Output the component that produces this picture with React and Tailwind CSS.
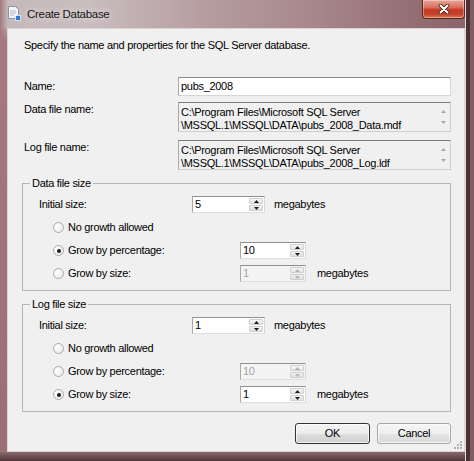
import React from "react";

function UpDown({ disabled }) {
  const c = disabled ? "#b4b4b4" : "#1e1e1e";
  return (
    <div className="flex w-[15px] flex-col gap-px py-px pr-px">
      <div className="flex flex-1 items-center justify-center rounded-[1px] border border-[#cfcfcf] bg-[linear-gradient(180deg,#f7f7f7,#e4e4e4)]">
        <svg width="5" height="3" viewBox="0 0 5 3">
          <path d="M2.5 0L5 3H0z" fill={c} />
        </svg>
      </div>
      <div className="flex flex-1 items-center justify-center rounded-[1px] border border-[#cfcfcf] bg-[linear-gradient(180deg,#f2f2f2,#dedede)]">
        <svg width="5" height="3" viewBox="0 0 5 3">
          <path d="M0 0H5L2.5 3z" fill={c} />
        </svg>
      </div>
    </div>
  );
}

function Spin({ value, disabled, wide }) {
  return (
    <div
      className={`flex h-[17px] border border-t-[#8f8f8f] border-l-[#a9a9a9] border-r-[#d9d9d9] border-b-[#dedede] ${
        disabled ? "bg-[#f4f4f4]" : "bg-white"
      } ${wide ? "w-[73px]" : "w-[66px]"}`}
    >
      <span
        className={`flex-1 pl-[2px] leading-[15px] ${
          disabled ? "text-[#a3a3a3]" : "text-black"
        }`}
      >
        {value}
      </span>
      <UpDown disabled={disabled} />
    </div>
  );
}

function Radio({ checked, label }) {
  return (
    <div className="ml-[23px] flex w-[187px] items-center">
      <span className="flex h-[11px] w-[11px] items-center justify-center rounded-full border border-[#ababab] bg-[radial-gradient(circle_at_35%_35%,#ffffff,#e6e6e6)]">
        {checked && <span className="h-[4px] w-[4px] rounded-full bg-[#1e1e1e]" />}
      </span>
      <span className="ml-[4px]">{label}</span>
    </div>
  );
}

function Group({ title, initial, mode, pct, size }) {
  return (
    <fieldset className="mt-[6px] border border-[#b6b6b6] pt-[6px] pb-[8px] pl-[7px] pr-[7px]">
      <legend className="px-[2px] leading-[14px]">{title}</legend>
      <div className="flex flex-col gap-[6px]">
        <div className="flex h-[17px] items-center">
          <span className="ml-[9px] w-[153px]">Initial size:</span>
          <Spin value={initial} wide />
          <span className="ml-[9px]">megabytes</span>
        </div>
        <div className="flex h-[17px] items-center">
          <Radio checked={mode === 0} label="No growth allowed" />
        </div>
        <div className="flex h-[17px] items-center">
          <Radio checked={mode === 1} label="Grow by percentage:" />
          <Spin value={pct} disabled={mode !== 1} />
        </div>
        <div className="flex h-[17px] items-center">
          <Radio checked={mode === 2} label="Grow by size:" />
          <Spin value={size} disabled={mode !== 2} />
          <span className="ml-[11px]">megabytes</span>
        </div>
      </div>
    </fieldset>
  );
}

function PathBox({ lines }) {
  return (
    <div className="flex h-[30px] w-[273px] border border-t-[#7e7e7e] border-l-[#a8a8a8] border-r-[#cfcfcf] border-b-[#cfcfcf] bg-[#f0f0f0]">
      <div className="flex-1 pl-[2px] pt-[3px] leading-[12.5px] text-black">
        <div>{lines[0]}</div>
        <div>{lines[1]}</div>
      </div>
      <div className="flex w-[14px] flex-col items-center justify-between py-[7px]">
        <svg width="5" height="3" viewBox="0 0 5 3">
          <path d="M2.5 0L5 3H0z" fill="#a8a8a8" />
        </svg>
        <svg width="5" height="3" viewBox="0 0 5 3">
          <path d="M0 0H5L2.5 3z" fill="#a8a8a8" />
        </svg>
      </div>
    </div>
  );
}

export default function App() {
  return (
    <div className="flex h-[461px] w-[474px] flex-col overflow-hidden bg-[linear-gradient(90deg,transparent_465px,#e4dada_465px,#e4dada_466px,#4c3034_466px,#4c3034_470px,#7e5e62_470px),linear-gradient(180deg,transparent_452px,#8a6a6e_452px,#4e3438_461px),linear-gradient(180deg,transparent_24px,#a5797e_40px,#9a6e73_461px),linear-gradient(180deg,rgba(255,255,255,0.2)_0px,rgba(255,255,255,0)_28px),linear-gradient(90deg,#a27c80_0px,#c6b9bb_8px,#c9bdbf_90px,#b79ea1_200px,#a6868a_320px,#926c70_420px,#8a6569_474px)] font-['Liberation_Sans',Arial,sans-serif] text-[11px] tracking-[-0.3px] text-black">
      <div className="flex h-[28px] shrink-0 items-start bg-[linear-gradient(90deg,#a27c80_0px,#c6b9bb_8px,#c9bdbf_90px,#b79ea1_200px,#a6868a_320px,#926c70_420px,#8a6569_465px,transparent_465px)]">
        <div className="ml-[7px] mt-[5px]">
          <svg width="14" height="16" viewBox="0 0 14 16">
            <path d="M1.5 1.5h7l3 3v9h-10z" fill="#f2f4f7" stroke="#8a949e" />
            <path d="M3 6h6M3 8h6M3 10h4" stroke="#a4aebb" strokeWidth="0.8" />
            <rect x="8.5" y="10.5" width="5" height="5" fill="#2a7bd2" stroke="#e8f0ff" strokeWidth="0.8" />
          </svg>
        </div>
        <span className="ml-[6px] mt-[7px] text-[11.5px] leading-[14px] text-[#141414] [text-shadow:0_0_6px_rgba(255,255,255,0.9)]">
          Create Database
        </span>
        <div className="ml-auto mr-[9px] flex h-[19px] w-[43px] items-center justify-center rounded-b-[4px] border border-t-0 border-[#5a2822] bg-[linear-gradient(180deg,#eaa597_0%,#d9735f_40%,#c33a24_55%,#c6432a_80%,#de7a52_100%)] shadow-[inset_0_0_0_1px_rgba(255,255,255,0.35)]">
          <svg width="12" height="10" viewBox="0 0 12 10">
            <path d="M2.5 1.5L9.5 8.5M9.5 1.5L2.5 8.5" stroke="#3a1a14" strokeWidth="3.6" strokeLinecap="round" />
            <path d="M2.5 1.5L9.5 8.5M9.5 1.5L2.5 8.5" stroke="#ffffff" strokeWidth="2.1" strokeLinecap="round" />
          </svg>
        </div>
      </div>

      <div className="relative ml-[7px] flex h-[424px] w-[458px] shrink-0 flex-col border border-[#ddd3d4] bg-[#f0f0f0] pl-[14px] pr-[13px] pt-[9px]">
        <p className="ml-[2px] leading-[14px]">
          Specify the name and properties for the SQL Server database.
        </p>

        <div className="mt-[25px] flex items-center">
          <span className="ml-[2px] w-[154px]">Name:</span>
          <div className="h-[19px] w-[273px] border border-t-[#8a8a8a] border-l-[#ababab] border-r-[#d6d6d6] border-b-[#d6d6d6] bg-white pl-[2px] leading-[17px] text-black">
            pubs_2008
          </div>
        </div>

        <div className="mt-[6px] flex items-start">
          <span className="ml-[2px] w-[154px] leading-[14px]">Data file name:</span>
          <PathBox
            lines={[
              "C:\\Program Files\\Microsoft SQL Server",
              "\\MSSQL.1\\MSSQL\\DATA\\pubs_2008_Data.mdf",
            ]}
          />
        </div>

        <div className="mt-[8px] flex items-start">
          <span className="ml-[2px] w-[154px] leading-[14px]">Log file name:</span>
          <PathBox
            lines={[
              "C:\\Program Files\\Microsoft SQL Server",
              "\\MSSQL.1\\MSSQL\\DATA\\pubs_2008_Log.ldf",
            ]}
          />
        </div>

        <Group title="Data file size" initial="5" mode={1} pct="10" size="1" />
        <Group title="Log file size" initial="1" mode={2} pct="10" size="1" />

        <div className="mt-[11px] flex justify-end gap-[7px]">
          <button className="h-[21px] w-[75px] rounded-[3px] border border-[#333333] bg-[linear-gradient(180deg,#f4f4f4_0%,#ececec_50%,#dedede_51%,#d0d0d0_100%)] text-[11px] text-black shadow-[inset_0_0_0_1px_rgba(255,255,255,0.7)]">
            OK
          </button>
          <button className="h-[21px] w-[74px] rounded-[3px] border border-[#a8a8a8] bg-[linear-gradient(180deg,#f6f6f6_0%,#efefef_50%,#e4e4e4_51%,#dadada_100%)] text-[11px] text-black shadow-[inset_0_0_0_1px_rgba(255,255,255,0.7)]">
            Cancel
          </button>
        </div>

        <svg className="absolute bottom-[1px] right-[1px]" width="11" height="11" viewBox="0 0 11 11">
          <g fill="#b8b0b0">
            <rect x="8" y="2" width="2" height="2" />
            <rect x="5" y="5" width="2" height="2" />
            <rect x="8" y="5" width="2" height="2" />
            <rect x="2" y="8" width="2" height="2" />
            <rect x="5" y="8" width="2" height="2" />
            <rect x="8" y="8" width="2" height="2" />
          </g>
        </svg>
      </div>
    </div>
  );
}
